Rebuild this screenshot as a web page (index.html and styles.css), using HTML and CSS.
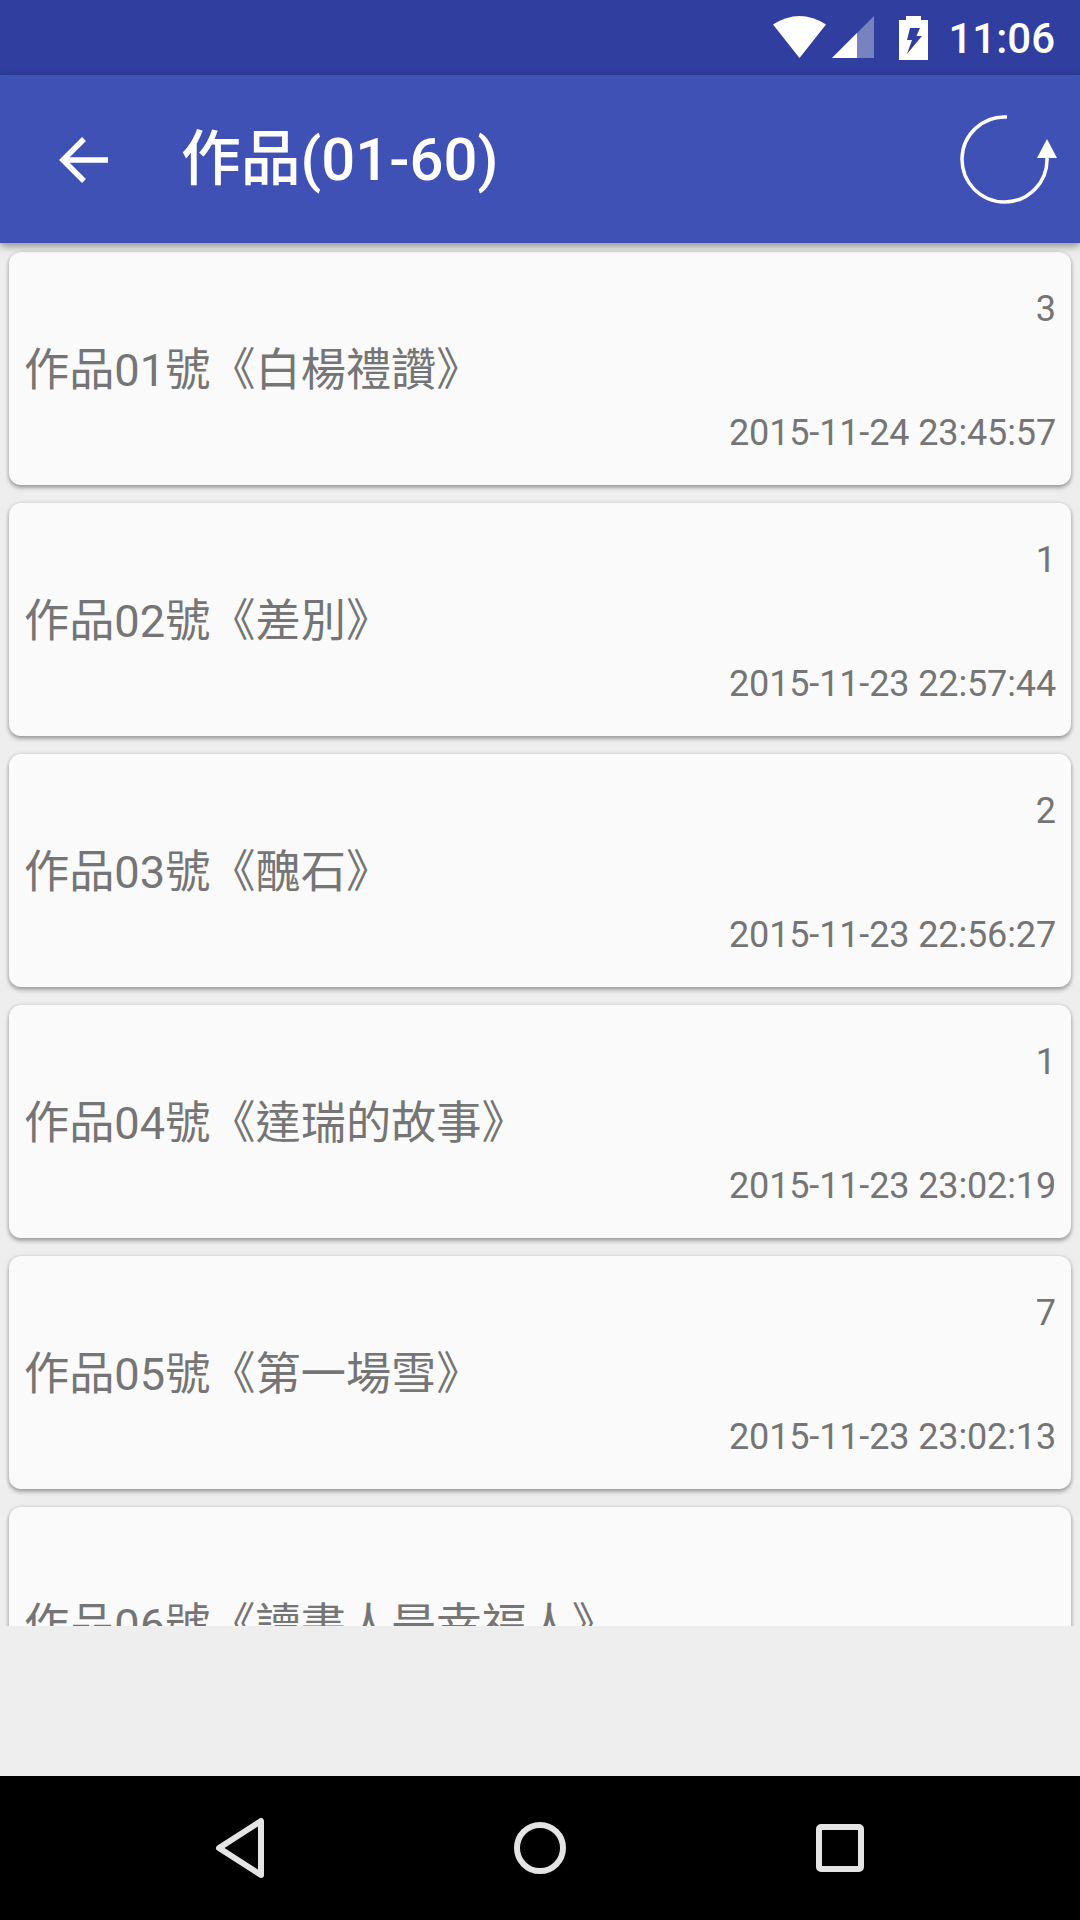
FILE: index.html
```html
<!DOCTYPE html>
<html lang="zh-Hant">
<head>
<meta charset="utf-8">
<title>作品(01-60)</title>
<link rel="stylesheet" href="styles.css">
</head>
<body>
<div class="app">
  <header class="status">
    <svg class="st-wifi" width="56" height="44" viewBox="0 0 56 44"><path d="M0 8.500Q26.500-8.500 53 8.500L26.500 42Z" fill="#fff"/></svg>
    <svg class="st-signal" width="44" height="44" viewBox="0 0 44 44"><path d="M0 42 42 0V42Z" fill="#fff" fill-opacity=".35"/><path d="M0 42 25 17V42Z" fill="#fff"/></svg>
    <svg class="st-batt" width="29" height="44" viewBox="0 0 29 44"><path d="M7 0H22V4H29V44H0V4H7Z" fill="#fff"/><path d="M11 12H21L17.500 20H23L8 38L13 24H8Z" fill="#303f9f"/></svg>
    <span class="clock">11:06</span>
  </header>
  <div class="toolbar">
    <svg class="back" width="50" height="48" viewBox="0 0 50 48"><path d="M49 24H4M25 3 4 24 25 45" fill="none" stroke="#fff" stroke-width="5.500"/></svg>
    <h1 class="title">作品(01-60)</h1>
    <svg class="refresh" width="100" height="92" viewBox="0 0 100 92"><path d="M48 3A42.500 42.500 0 1 0 88 44" fill="none" stroke="#fff" stroke-width="3.500"/><path d="M88 25 98 44H78Z" fill="#fff"/></svg>
  </div>
  <main class="list">
    <article class="card"><div class="count">3</div><div class="name">作品01號《白楊禮讚》</div><div class="date">2015-11-24 23:45:57</div></article>
    <article class="card"><div class="count">1</div><div class="name">作品02號《差別》</div><div class="date">2015-11-23 22:57:44</div></article>
    <article class="card"><div class="count">2</div><div class="name">作品03號《醜石》</div><div class="date">2015-11-23 22:56:27</div></article>
    <article class="card"><div class="count">1</div><div class="name">作品04號《達瑞的故事》</div><div class="date">2015-11-23 23:02:19</div></article>
    <article class="card"><div class="count">7</div><div class="name">作品05號《第一場雪》</div><div class="date">2015-11-23 23:02:13</div></article>
    <article class="card"><div class="count"></div><div class="name">作品06號《讀書人是幸福人》</div><div class="date"></div></article>
  </main>
  <div class="spacer"></div>
  <nav class="navbar">
    <div class="nav-item"><svg width="60" height="64" viewBox="0 0 60 64"><path d="M9 32 51 5V59Z" fill="none" stroke="#e4e4e4" stroke-width="6" stroke-linejoin="round"/></svg></div>
    <div class="nav-item"><svg width="60" height="60" viewBox="0 0 60 60"><circle cx="30" cy="30" r="23" fill="none" stroke="#e4e4e4" stroke-width="6"/></svg></div>
    <div class="nav-item"><svg width="60" height="60" viewBox="0 0 60 60"><rect x="9" y="9" width="42" height="42" rx="2" fill="none" stroke="#e4e4e4" stroke-width="6"/></svg></div>
  </nav>
</div>
</body>
</html>
```

FILE: styles.css
```css
* { box-sizing: border-box; }
html, body { margin: 0; padding: 0; }
body { width: 1080px; height: 1920px; overflow: hidden; font-family: Roboto, "Noto Sans CJK TC", sans-serif; }
.app { width: 1080px; height: 1920px; display: flex; flex-direction: column; background: #eeeeee; }

.status { height: 75px; flex: none; background: #303f9f; display: flex; align-items: center; justify-content: flex-end; padding-right: 25px; color: #fff; }
.st-wifi { margin-right: 3px; margin-top: 1px; }
.st-signal { margin-right: 23px; margin-top: 1px; }
.st-batt { margin-right: 20px; margin-top: 1px; }
.clock { font-size: 42px; font-weight: 500; line-height: 75px; padding-top: 2px; }

.toolbar { height: 168px; flex: none; background: #3f51b5; display: flex; align-items: center; position: relative; z-index: 1; box-shadow: 0 3px 8px rgba(0,0,0,.42); padding-left: 59px; padding-right: 21px; }
.back { flex: none; margin-right: 72px; margin-top: 2px; }
.title { margin: 0; flex: 1; color: #fff; font-size: 59.8px; font-weight: 500; line-height: 168px; padding-top: 2px; }
.refresh { flex: none; margin-top: 2px; }

.list { height: 1383px; flex: none; overflow: hidden; display: flex; flex-direction: column; gap: 18px; padding: 9px 9px 0; }
.card { flex: none; height: 233px; background: #fafafa; border-radius: 12px; padding: 26px 15px 21px 15px; box-shadow: 0 3px 4px rgba(0,0,0,.3), 0 0 4px rgba(0,0,0,.14); color: #757575; }
.count, .date { height: 62px; line-height: 62px; text-align: right; font-size: 36px; }
.date { letter-spacing: -0.13px; }
.name { height: 62px; line-height: 60px; font-size: 45.2px; white-space: nowrap; padding-top: 1px; }

.spacer { flex: 1; background: #eeeeee; position: relative; z-index: 1; }
.navbar { height: 144px; flex: none; background: #000; display: flex; justify-content: center; align-items: center; }
.nav-item { width: 300px; display: flex; justify-content: center; align-items: center; }
.nav-item svg { display: block; }
```
